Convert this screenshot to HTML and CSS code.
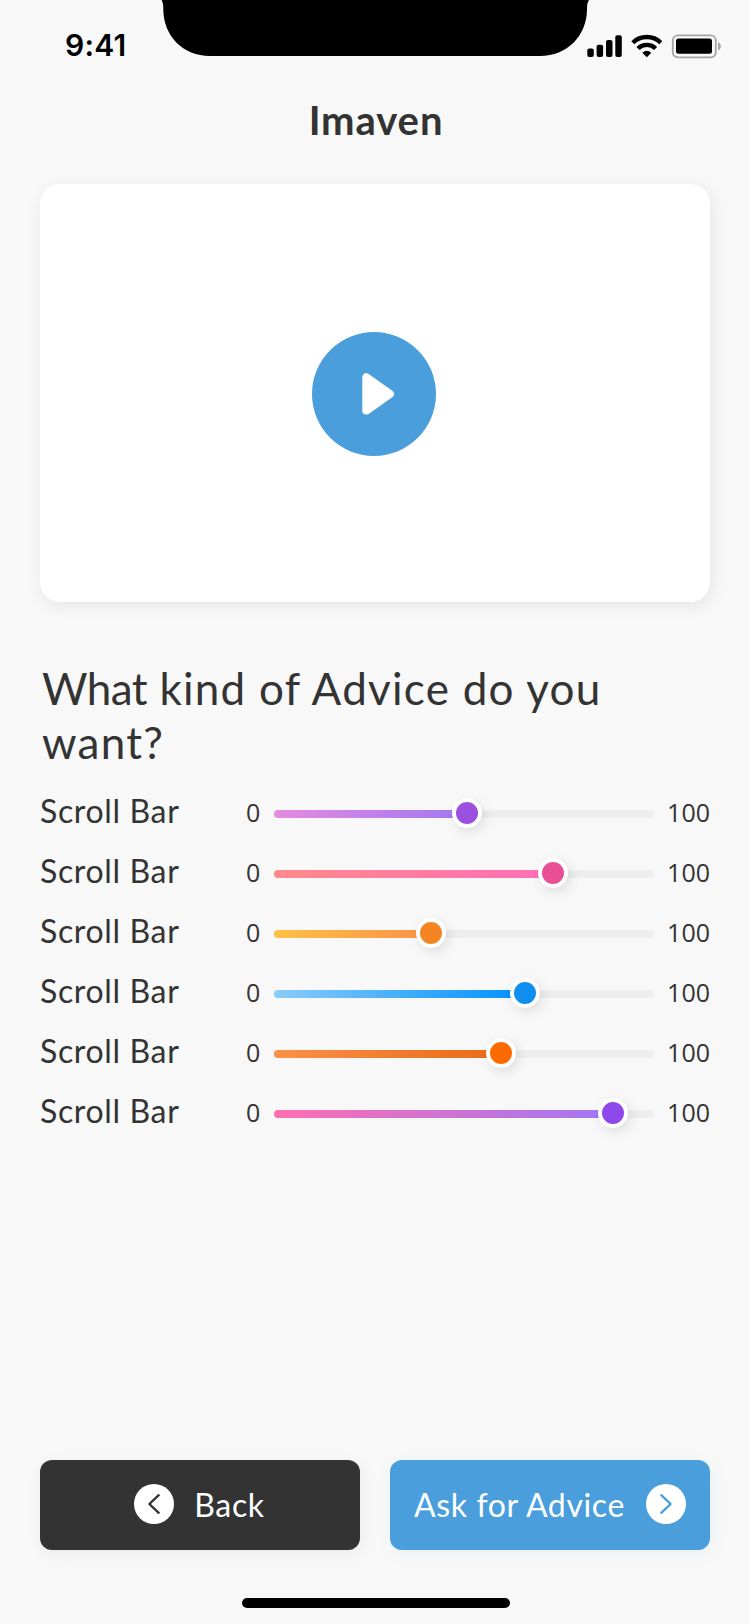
FILE: index.html
```html
<!DOCTYPE html>
<html lang="en">
<head>
<meta charset="utf-8">
<title>Imaven</title>
<link rel="stylesheet" href="styles.css">
</head>
<body>
<div class="screen">
  <header class="status">
    <span class="time">9:41</span>
    <svg class="notch" width="428" height="56" viewBox="0 0 428 56"><path d="M0.500 0C2 2.500 2.300 5 2.300 9C2.300 36 22 56 49 56H379C406 56 426 36 426 9C426 5 426.300 2.500 428 0Z"/></svg>
    <svg class="signals" width="136" height="26" viewBox="0 0 136 26">
      <rect x="0.300" y="14.500" width="6.500" height="8.500" rx="2"/>
      <rect x="9.600" y="10.700" width="6.500" height="12.300" rx="2"/>
      <rect x="19" y="6" width="6.500" height="17" rx="2"/>
      <rect x="28.300" y="1.200" width="6.500" height="21.800" rx="2"/>
      <g fill="none" stroke="#000" stroke-width="4.400">
        <path d="M45.800 8.700a20 20 0 0 1 28 0"/>
        <path d="M51 14.500a12.600 12.600 0 0 1 17.600 0"/>
      </g>
      <path d="M59.800 23.300l-4.500-4.600q4.500-3.800 9 0z"/>
      <rect x="85.800" y="1.300" width="43" height="22" rx="5" fill="none" stroke="#a5a5a5" stroke-width="1.800"/>
      <rect x="89" y="4.600" width="36" height="15.200" rx="2.500"/>
      <path fill="#a5a5a5" d="M131 8.300q2.800 1 2.800 4t-2.800 4z"/>
    </svg>
  </header>

  <h1 class="title">Imaven</h1>

  <main class="content">
    <div class="video">
      <button class="play" aria-label="Play">
        <svg width="124" height="124" viewBox="0 0 124 124"><path fill="#fff" stroke="#fff" stroke-width="8" stroke-linejoin="round" d="M54.300 45.300V78.600L78 62Z"/></svg>
      </button>
    </div>

    <h2 class="question">
      <span class="line"><span class="tight">What</span> <span>kind of Advice do you</span></span>
      <span class="line"><span>want?</span></span>
    </h2>

    <div class="sliders">
      <div class="row"><span class="label">Scroll Bar</span><span class="min">0</span><div class="track"><div class="fill violet" style="width:193px"><i class="thumb"></i></div></div><span class="max">100</span></div>
      <div class="row"><span class="label">Scroll Bar</span><span class="min">0</span><div class="track"><div class="fill pink" style="width:279px"><i class="thumb"></i></div></div><span class="max">100</span></div>
      <div class="row"><span class="label">Scroll Bar</span><span class="min">0</span><div class="track"><div class="fill amber" style="width:157px"><i class="thumb"></i></div></div><span class="max">100</span></div>
      <div class="row"><span class="label">Scroll Bar</span><span class="min">0</span><div class="track"><div class="fill blue" style="width:251px"><i class="thumb"></i></div></div><span class="max">100</span></div>
      <div class="row"><span class="label">Scroll Bar</span><span class="min">0</span><div class="track"><div class="fill orange" style="width:227px"><i class="thumb"></i></div></div><span class="max">100</span></div>
      <div class="row"><span class="label">Scroll Bar</span><span class="min">0</span><div class="track"><div class="fill purple" style="width:339px"><i class="thumb"></i></div></div><span class="max">100</span></div>
    </div>
  </main>

  <footer class="actions">
    <button class="btn back">
      <svg class="arrow" width="40" height="40" viewBox="0 0 40 40"><circle cx="20" cy="20" r="20" fill="#fff"/><path d="M24.700 11.200L15.400 20l9.300 8.800"/></svg>
      <span class="btn-text">Back</span>
    </button>
    <button class="btn ask">
      <span class="btn-text">Ask for Advice</span>
      <svg class="arrow" width="40" height="40" viewBox="0 0 40 40"><circle cx="20" cy="20" r="20" fill="#fff"/><path d="M15.300 11.200l9.300 8.800-9.300 8.800"/></svg>
    </button>
  </footer>
  <div class="home"></div>
</div>
</body>
</html>
```
FILE: styles.css
```css
* { box-sizing: border-box; }
body { margin: 0; background: #f8f8f8; }
.screen {
  width: 750px; height: 1624px;
  display: flex; flex-direction: column;
  overflow: hidden;
  color: #333;
  font-family: Lato, "Open Sans", sans-serif;
}
.status { height: 88px; display: flex; align-items: flex-start; flex: none; }
.time {
  width: 161px; padding: 27px 0 0 65px;
  font: 600 30px/36px Inter, sans-serif; color: #000;
  letter-spacing: .2px; white-space: nowrap;
}
.notch { flex: none; margin-right: -2px; }
.signals { flex: none; margin-top: 34px; }
.title {
  margin: 0; height: 96px; padding: 8px 0 0 2px;
  font-size: 40px; line-height: 48px; font-weight: 700; text-align: center;
  letter-spacing: .9px;
}
.content { padding: 0 40px; flex: 1; }
.video {
  height: 418px; border-radius: 20px; background: #fff;
  box-shadow: 2px 4px 16px rgba(0, 0, 0, .08);
  padding: 148px 0 0 272px;
}
.play {
  display: block; width: 124px; height: 124px; padding: 0;
  border: 0; border-radius: 50%; background: #4a9edc;
}
.play svg { display: block; }
.question {
  margin: 59px 0 0 2px;
  font-size: 44px; line-height: 54px; font-weight: 400;
  letter-spacing: 1.25px;
}
.line { display: block; white-space: nowrap; }
.tight { letter-spacing: -.6px; }
.sliders { margin-top: 15px; display: flex; flex-direction: column; }
.row {
  height: 60px; display: grid; align-items: center;
  grid-template-columns: 206px 28px 380px 1fr;
}
.label { font-size: 32px; line-height: 40px; padding-bottom: 6px; white-space: nowrap; letter-spacing: .65px; }
.min, .max { font: 400 25px/32px "Open Sans", sans-serif; padding-bottom: 4px; }
.max { text-align: right; }
.track { height: 8px; border-radius: 4px; background: #eee; }
.fill { height: 8px; border-radius: 4px; position: relative; }
.thumb {
  position: absolute; right: -15px; top: -12px;
  width: 30px; height: 30px; border-radius: 50%;
  border: 4px solid #fff; background: var(--thumb);
  box-shadow: 3px 4px 12px rgba(0, 0, 0, .1);
}
.violet { background: linear-gradient(90deg, #e48bdc, #a077f4); --thumb: #9b51e0; }
.pink { background: linear-gradient(90deg, #ff8a8a, #ff6eb9); --thumb: #e84f96; }
.amber { background: linear-gradient(90deg, #ffc045, #fa9148); --thumb: #f58423; }
.blue { background: linear-gradient(90deg, #8accf8, #0090ff); --thumb: #0f8ff0; }
.orange { background: linear-gradient(90deg, #fa9148, #e86a17); --thumb: #ff6a00; }
.purple { background: linear-gradient(90deg, #ff6eb0, #a077f4); --thumb: #8f48ec; }
.actions { flex: none; display: flex; gap: 30px; padding: 0 40px; }
.btn {
  flex: 1; height: 90px; padding: 0; border: 0; border-radius: 12px;
  display: flex; justify-content: center; align-items: center; gap: 21px;
  color: #fff; font: 400 32px/40px Lato, sans-serif; white-space: nowrap;
  letter-spacing: .62px;
}
.back { background: #333; box-shadow: 2px 4px 16px rgba(0, 0, 0, .06); --ink: #333; }
.back .btn-text { margin: 0 1px 0 -1px; }
.ask { background: #4a9edc; box-shadow: 2px 4px 16px rgba(74, 158, 220, .08); --ink: #4a9edc; }
.arrow { flex: none; margin-bottom: 2px; }
.arrow path { fill: none; stroke: var(--ink); stroke-width: 2.4; stroke-linecap: round; stroke-linejoin: round; }
.home {
  flex: none; width: 268px; height: 10px; border-radius: 5px; background: #000;
  margin: 48px 0 16px 242px;
}
```
